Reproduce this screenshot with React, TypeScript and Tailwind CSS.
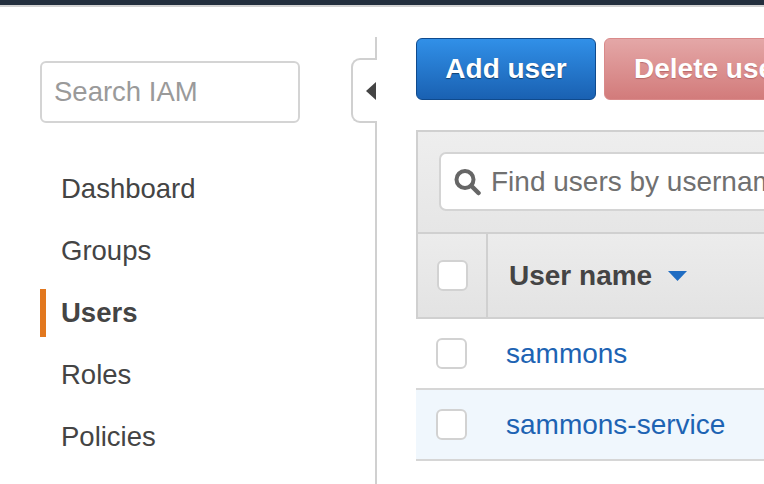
const navItems = ["Dashboard", "Groups", "Users", "Roles", "Policies"];

const users = [
  { name: "sammons", highlight: false },
  { name: "sammons-service", highlight: true },
];

function Checkbox() {
  return (
    <div className="h-[31px] w-[31px] shrink-0 rounded-[6px] border-2 border-[#d2d2d2] bg-white" />
  );
}

function SearchIcon() {
  return (
    <svg width="30" height="28" viewBox="0 0 30 28" fill="none">
      <circle cx="12" cy="11.5" r="8.5" stroke="#666" strokeWidth="4" />
      <path d="M18.5 18 L25.5 25" stroke="#666" strokeWidth="4.5" strokeLinecap="round" />
    </svg>
  );
}

export default function App() {
  return (
    <div className="h-[484px] w-[764px] overflow-hidden bg-white font-['Liberation_Sans',Arial,sans-serif] text-[#444]">
      <div className="h-[5px] bg-[#232f3e]" />
      <div className="h-[2px] bg-[#d3d3d3]" />

      <div className="flex">
        {/* sidebar */}
        <aside className="relative mt-[30px] h-[460px] w-[377px] shrink-0 border-r-2 border-[#d0d0d0] pl-10 pt-6">
          <div className="flex h-[62px] w-[260px] items-center rounded-[6px] border-2 border-[#d4d4d4] px-[12px] text-[27.5px] text-[#9a9a9a]">
            Search IAM
          </div>

          <nav className="mt-[35px] flex flex-col">
            {navItems.map((item) => (
              <div key={item} className="relative flex h-[62px] items-center pl-[21px] text-[27.5px]">
                {item === "Users" && (
                  <span className="absolute left-0 top-[7px] h-[48px] w-[6px] bg-[#e2781f]" />
                )}
                <span className={item === "Users" ? "font-bold" : ""}>{item}</span>
              </div>
            ))}
          </nav>

          {/* collapse tab */}
          <div className="absolute right-[-2px] top-[21px] flex h-[65px] w-[26px] items-center justify-end rounded-l-[9px] border-2 border-r-0 border-[#d0d0d0] bg-white">
            <svg width="10" height="18" viewBox="0 0 10 18" className="mr-[1px]">
              <path d="M10 0 L10 18 L0 9 Z" fill="#444" />
            </svg>
          </div>
        </aside>

        {/* main */}
        <main className="pl-[39px] pt-[31px]">
          <div className="flex gap-2">
            <button className="h-[62px] w-[180px] shrink-0 rounded-[6px] border border-[#0f4a8d] bg-gradient-to-b from-[#3190e8] to-[#1a61b2] text-[28px] font-bold text-white [text-shadow:0_1px_1px_rgba(0,0,0,0.45)]">
              Add user
            </button>
            <button className="h-[62px] w-[220px] shrink-0 rounded-[6px] border border-[#d98a8a] bg-gradient-to-b from-[#e4a7a7] to-[#d27b7b] pl-[29px] text-left text-[28px] font-bold text-white [text-shadow:0_1px_1px_rgba(120,40,40,0.35)]">
              Delete user
            </button>
          </div>

          <div className="mt-[30px] w-[700px]">
            <div className="border-2 border-[#d0d0d0] bg-gradient-to-b from-[#eeeeee] to-[#e6e6e6] px-[21px] pb-[21px] pt-[20px]">
              <div className="flex h-[59px] items-center gap-[8px] rounded-[7px] border-2 border-[#d4d4d4] bg-white pl-[12px] text-[28px] text-[#707070]">
                <SearchIcon />
                <span>Find users by username or access key</span>
              </div>
            </div>

            <div className="flex h-[85px] items-stretch border-x-2 border-b-2 border-[#d0d0d0] bg-gradient-to-b from-[#ececec] to-[#e3e3e3]">
              <div className="flex w-[70px] shrink-0 items-center border-r-2 border-[#d0d0d0] pl-[19px]">
                <Checkbox />
              </div>
              <div className="flex items-center gap-4 pl-[21px] text-[28px] font-bold text-[#444]">
                <span>User name</span>
                <svg width="19" height="10" viewBox="0 0 19 10">
                  <path d="M0 0 L19 0 L9.5 10 Z" fill="#1f6cc2" />
                </svg>
              </div>
            </div>

            {users.map((u) => (
              <div
                key={u.name}
                className={`flex h-[71px] items-center border-b-2 border-[#d6d6d6] pl-[20px] ${u.highlight ? "bg-[#f0f7fd]" : "bg-white"}`}
              >
                <Checkbox />
                <span className="ml-[39px] text-[28px] text-[#1d63b3]">{u.name}</span>
              </div>
            ))}
          </div>
        </main>
      </div>
    </div>
  );
}
